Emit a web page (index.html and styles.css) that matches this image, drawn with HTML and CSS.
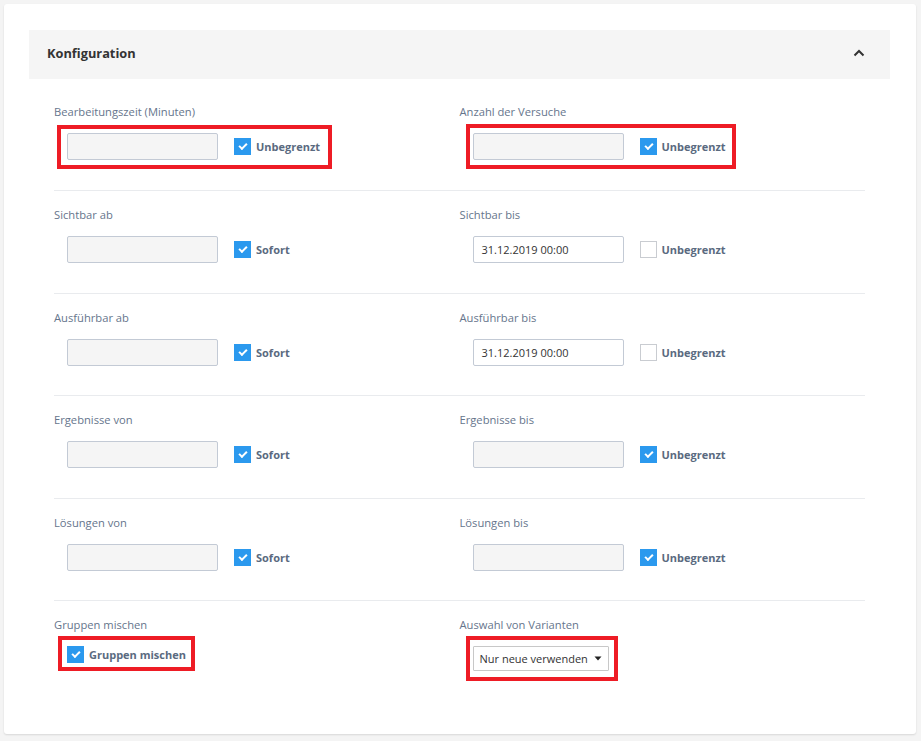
FILE: index.html
```html
<!DOCTYPE html>
<html lang="de">
<head>
<meta charset="utf-8">
<title>Konfiguration</title>
<link rel="stylesheet" href="styles.css">
</head>
<body>
<div class="card">
  <div class="panel-head">
    <span class="panel-title">Konfiguration</span>
    <svg class="chevron" width="12" height="8" viewBox="0 0 12 8"><path d="M1.5 6.5 L6 2 L10.5 6.5" fill="none" stroke="#333" stroke-width="2"/></svg>
  </div>
  <div class="panel-body">
    <div class="row">
      <div class="field">
        <div class="label">Bearbeitungszeit (Minuten)</div>
        <div class="controls hl hl-a">
          <span class="input"></span>
          <span class="check on"></span><span class="check-label">Unbegrenzt</span>
        </div>
      </div>
      <div class="field">
        <div class="label">Anzahl der Versuche</div>
        <div class="controls hl hl-b">
          <span class="input"></span>
          <span class="check on"></span><span class="check-label">Unbegrenzt</span>
        </div>
      </div>
    </div>
    <div class="row">
      <div class="field">
        <div class="label">Sichtbar ab</div>
        <div class="controls">
          <span class="input"></span>
          <span class="check on"></span><span class="check-label">Sofort</span>
        </div>
      </div>
      <div class="field">
        <div class="label">Sichtbar bis</div>
        <div class="controls">
          <span class="input white">31.12.2019 00:00</span>
          <span class="check"></span><span class="check-label">Unbegrenzt</span>
        </div>
      </div>
    </div>
    <div class="row">
      <div class="field">
        <div class="label">Ausführbar ab</div>
        <div class="controls">
          <span class="input"></span>
          <span class="check on"></span><span class="check-label">Sofort</span>
        </div>
      </div>
      <div class="field">
        <div class="label">Ausführbar bis</div>
        <div class="controls">
          <span class="input white">31.12.2019 00:00</span>
          <span class="check"></span><span class="check-label">Unbegrenzt</span>
        </div>
      </div>
    </div>
    <div class="row">
      <div class="field">
        <div class="label">Ergebnisse von</div>
        <div class="controls">
          <span class="input"></span>
          <span class="check on"></span><span class="check-label">Sofort</span>
        </div>
      </div>
      <div class="field">
        <div class="label">Ergebnisse bis</div>
        <div class="controls">
          <span class="input"></span>
          <span class="check on"></span><span class="check-label">Unbegrenzt</span>
        </div>
      </div>
    </div>
    <div class="row">
      <div class="field">
        <div class="label">Lösungen von</div>
        <div class="controls">
          <span class="input"></span>
          <span class="check on"></span><span class="check-label">Sofort</span>
        </div>
      </div>
      <div class="field">
        <div class="label">Lösungen bis</div>
        <div class="controls">
          <span class="input"></span>
          <span class="check on"></span><span class="check-label">Unbegrenzt</span>
        </div>
      </div>
    </div>
    <div class="row last">
      <div class="field">
        <div class="label">Gruppen mischen</div>
        <div class="controls compact hl hl-c">
          <span class="check on first"></span><span class="check-label">Gruppen mischen</span>
        </div>
      </div>
      <div class="field">
        <div class="label">Auswahl von Varianten</div>
        <div class="controls select-wrap hl hl-d">
          <span class="select">Nur neue verwenden <svg class="caret" width="8" height="5" viewBox="0 0 8 5"><path d="M0.5 0.5 L7.5 0.5 L4 4.5 Z" fill="#222"/></svg></span>
        </div>
      </div>
    </div>
  </div>
</div>
</body>
</html>
```

FILE: styles.css
```css
html, body {
  margin: 0;
  padding: 0;
  background: #f4f4f4;
  font-family: "Open Sans", "Liberation Sans", sans-serif;
}
body {
  padding: 4px 5px 7px 4px;
}
.card {
  background: #fff;
  border-radius: 3px;
  box-shadow: 0 1px 2px rgba(0,0,0,0.12);
  padding: 26px 26px 0 25px;
  box-sizing: border-box;
  height: 730px;
}
.panel-head {
  background: #f5f5f5;
  height: 49px;
  box-sizing: border-box;
  display: flex;
  align-items: center;
  justify-content: space-between;
  padding: 0 25px 3px 18px;
}
.panel-title {
  font-size: 12.8px;
  font-weight: 700;
  color: #333;
}
.chevron {
  display: block;
}
.panel-body {
  padding: 0 25px;
}
.row {
  display: grid;
  grid-template-columns: 1fr 1fr;
  padding: 16px 0 29.5px;
  border-bottom: 1px solid #e9ebee;
}
.row:first-child {
  padding-top: 25px;
  padding-bottom: 30px;
}
.row.last {
  border-bottom: none;
}
.label {
  font-size: 11.2px;
  line-height: 16px;
  color: #66758c;
  margin-bottom: 13px;
}
.controls {
  display: flex;
  align-items: center;
  height: 27px;
  margin-left: 13px;
  position: relative;
  width: max-content;
}
.controls.compact {
  height: 17px;
}
.controls.select-wrap {
  height: 25px;
}
.input {
  width: 151px;
  height: 27px;
  box-sizing: border-box;
  border: 1px solid #c3cad5;
  border-radius: 2px;
  background: #f5f5f5;
  font-size: 11px;
  color: #333;
  padding: 0 8px;
  line-height: 25px;
}
.input.white {
  background: #fff;
}
.check {
  width: 17px;
  height: 17px;
  box-sizing: border-box;
  border: 1px solid #c9ccd1;
  background: #fff;
  margin-left: 16px;
  margin-right: 5px;
  position: relative;
}
.check.first {
  margin-left: 0;
}
.check.on {
  background: #2b99ee;
  border-color: #2b99ee;
}
.check.on::after {
  content: "";
  position: absolute;
  left: 4px;
  top: 3px;
  width: 6px;
  height: 3px;
  border-left: 2px solid #fff;
  border-bottom: 2px solid #fff;
  transform: rotate(-45deg);
  transform-origin: center;
  margin-top: 1px;
}
.check-label {
  font-size: 11px;
  font-weight: 700;
  color: #5a6a80;
}
.select {
  display: flex;
  align-items: center;
  gap: 6px;
  height: 25px;
  box-sizing: border-box;
  border: 1px solid #c8c8c8;
  border-radius: 1px;
  background: #fff;
  font-size: 11px;
  color: #333;
  padding: 0 6px 0 6px;
}
.caret {
  display: block;
}
.hl::after {
  content: "";
  position: absolute;
  border: 4px solid #ee1c25;
  pointer-events: none;
}
.hl-a::after {
  left: -10px;
  top: -8px;
  right: -12px;
  bottom: -9px;
}
.hl-b::after {
  left: -7px;
  top: -9px;
  right: -10px;
  bottom: -9px;
}
.hl-c::after {
  left: -9px;
  top: -10px;
  right: -9px;
  bottom: -8px;
}
.hl-d::after {
  left: -7px;
  top: -10px;
  right: -9px;
  bottom: -10px;
}
```
